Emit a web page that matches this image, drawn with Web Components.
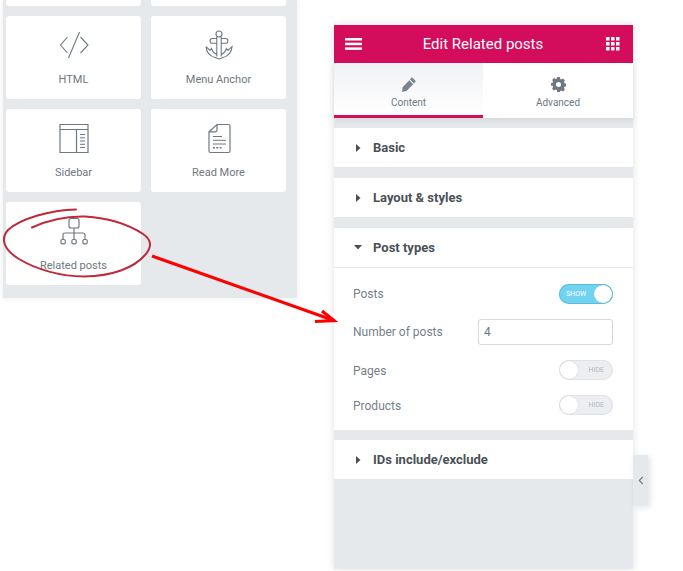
<!DOCTYPE html>
<html><head><meta charset="utf-8"><style>
html,body{margin:0;padding:0;background:#fff;font-family:Roboto,sans-serif}
body{width:683px;height:571px;overflow:hidden;position:relative}
.page{display:flex;align-items:flex-start;padding-left:3px}
</style></head><body>
<div class="page">
<widget-panel>
<widget-card class="stub"></widget-card><widget-card class="stub"></widget-card>
<widget-card label="HTML"><svg viewBox="0 0 50 50" width="50" height="50" fill="none" stroke="#6d7882" stroke-width="1.1"><path d="M18.500 15 11.500 23 18.500 31M31.500 15 39 23 31.500 31M30.500 10 19.500 36"/></svg></widget-card>
<widget-card label="Menu Anchor"><svg viewBox="0 0 50 50" width="50" height="50" fill="none" stroke="#6d7882" stroke-width="1.1"><circle cx="25" cy="12" r="3"/><path d="M22.800 15V34.500M27.200 15V34.500M22.800 16.500H18.500a2.300 2.300 0 0 0 0 4.800H22.800M27.200 16.500H31.500a2.300 2.300 0 0 1 0 4.800H27.200M12 24.700c.5 6 4.500 9.500 9 10.800L25 37l4-1.500c4.500-1.300 8.500-4.800 9-10.800l-4 3.800-1.500-2c-1 3-3.500 5.300-5.300 6M12 24.700l4 3.800 1.500-2c1 3 3.500 5.300 5.300 6"/></svg></widget-card>
<widget-card label="Sidebar"><svg viewBox="0 0 50 50" width="50" height="50" fill="none" stroke="#6d7882" stroke-width="1.200"><path d="M11 9.500H39V37.500H11ZM11 14.500H39M27.500 14.500V37.500"/><path stroke-width="1" d="M31 19.500h5M31 22.800h5M31 26h5M31 29.300h5M31 32.500h5"/></svg></widget-card>
<widget-card label="Read More"><svg viewBox="0 0 50 50" width="50" height="50" fill="none" stroke="#6d7882" stroke-width="1.200"><path d="M23 9.500H34.500a1.500 1.500 0 0 1 1.500 1.500V36a1.500 1.500 0 0 1-1.500 1.500H16.500a1.500 1.500 0 0 1-1.500-1.500V16.800ZM15 16.800H21.500a1.500 1.500 0 0 0 1.500-1.500V9.500"/><path stroke-width="1" d="M19 21.500h9M19 25.300h13M19 29h13"/><path stroke-width="1.500" stroke-dasharray="2 1.300" d="M19 32.800h9"/></svg></widget-card>
<widget-card label="Related posts"><svg viewBox="0 0 50 50" width="50" height="50" fill="none" stroke="#6d7882" stroke-width="1.200"><rect x="20" y="10.500" width="10" height="9.500" rx="2"/><path d="M25 20V31M14 31v-4a2 2 0 0 1 2-2H34a2 2 0 0 1 2 2V31"/><rect x="12" y="31.500" width="4.300" height="4.300" rx="1.300"/><rect x="22.900" y="31.500" width="4.300" height="4.300" rx="1.300"/><rect x="33.900" y="31.500" width="4.300" height="4.300" rx="1.300"/></svg></widget-card>
</widget-panel>
<edit-panel title-text="Edit Related posts">
<panel-section heading="Basic"></panel-section>
<panel-section heading="Layout &amp; styles"></panel-section>
<panel-section heading="Post types" open>
<control-row label="Posts" style="height:38px"><toggle-switch on></toggle-switch></control-row>
<control-row label="Number of posts" style="height:38px"><number-input value="4"></number-input></control-row>
<control-row label="Pages" style="height:38px;--ls:2px"><toggle-switch></toggle-switch></control-row>
<control-row label="Products" style="height:32px;--ls:2px"><toggle-switch></toggle-switch></control-row>
</panel-section>
<panel-section heading="IDs include/exclude" style="margin-top:-1px"></panel-section>
</edit-panel>
</div>
<annotation-marks></annotation-marks>
<script>
customElements.define('widget-panel',class extends HTMLElement{constructor(){super();this.attachShadow({mode:'open'}).innerHTML=`<style>:host{display:block;width:294px;height:298px;background:#e6e9ec;box-shadow:0 0 6px rgba(0,0,0,.08);flex:none}
.g{display:grid;grid-template-columns:135px 135px;grid-template-rows:6px 83px 83px 83px;gap:10px;padding-left:3px}</style><div class="g"><slot></slot></div>`}});
customElements.define('widget-card',class extends HTMLElement{constructor(){super();this.attachShadow({mode:'open'}).innerHTML=`<style>:host{display:flex;flex-direction:column;align-items:center;background:#fff;border-radius:3px;height:100%;overflow:hidden}
:host(.stub){border-radius:0 0 3px 3px}
.i{height:50px;width:50px;margin-top:6px;display:block}.l{font:11px/13px Roboto,sans-serif;color:#6d7882;margin-top:.5px}</style><div class="i"><slot></slot></div><div class="l"></div>`}
connectedCallback(){const l=this.getAttribute('label');if(l)this.shadowRoot.querySelector('.l').textContent=l}});
customElements.define('edit-panel',class extends HTMLElement{constructor(){super();this.attachShadow({mode:'open'}).innerHTML=`<style>:host{display:block;position:relative;width:299px;height:544px;margin:25px 0 0 37px;background:#e6e9ec;box-shadow:0 0 8px rgba(0,0,0,.12);flex:none}
header{height:38px;background:#d30c5c;color:#fff;display:flex;align-items:center;justify-content:space-between;padding:0 13px 0 11px}
h1{margin:0 3px 0 0;font:400 15px/37px Roboto,sans-serif;color:#fff}
.tabs{display:flex;height:55px;background:#fff;box-shadow:0 3px 6px rgba(0,0,0,.07);position:relative;margin-bottom:10px}
.tab{width:149px;flex:none;display:flex;flex-direction:column;align-items:center;font:10px/12px Roboto,sans-serif;color:#6d7882;box-sizing:border-box;padding-top:14px}
.tab.a{background:linear-gradient(#f0f1f4,#fff);border-bottom:3px solid #d30c5c}
.tab svg{display:block;margin-bottom:5px}
.tab.b{flex:1}
.sec{display:flex;flex-direction:column;gap:11px}
.col{position:absolute;left:299px;top:430px;width:15px;height:50px;background:#e6e9ec;box-shadow:2px 2px 6px rgba(0,0,0,.12);display:flex;align-items:center;justify-content:center}</style>
<header><svg width="18" height="12" viewBox="0 0 18 12" fill="#fff"><rect width="17" height="2.500" y="0"/><rect width="17" height="2.500" y="4.700"/><rect width="17" height="2.500" y="9.400"/></svg><h1></h1><svg width="14" height="14" viewBox="0 0 14 14" fill="#fff"><path d="M0 0h3.500v3.500H0zM5 0h3.500v3.500H5zM10 0h3.500v3.500H10zM0 5h3.500v3.500H0zM5 5h3.500v3.500H5zM10 5h3.500v3.500H10zM0 10h3.500v3.500H0zM5 10h3.500v3.500H5zM10 10h3.500v3.500H10z"/></svg></header>
<div class="tabs"><div class="tab a"><svg width="14" height="15" viewBox="0 0 14 15" fill="#7a848e"><path d="M10.300.8l3 2.700c.4.400.4 1 0 1.400l-1.400 1.500L8 2.500 9 .9c.4-.4.900-.4 1.300-.1zM7.300 3.300l3.900 3.900-6.700 6.900L0 15l.6-4.700z"/></svg>Content</div><div class="tab b"><svg width="15" height="15" viewBox="0 0 15 15"><path fill="#6d7882" fill-rule="evenodd" d="M6.200 0h2.600l.4 2c.4.100.8.300 1.100.5l1.800-1 1.800 1.900-1 1.700c.2.400.4.800.5 1.200l2 .4v2.600l-2 .4c-.1.400-.3.800-.5 1.200l1 1.700-1.800 1.800-1.800-1c-.3.200-.7.400-1.100.5L8.800 15H6.200l-.4-2c-.4-.1-.8-.3-1.100-.5l-1.800 1-1.800-1.800 1-1.700c-.2-.4-.4-.8-.5-1.200L0 8.800V6.200l1.600-.4c.1-.4.300-.8.500-1.200l-1-1.700L3 1.100l1.800 1c.3-.2.700-.4 1.100-.5zM7.500 5a2.500 2.500 0 1 0 0 5 2.500 2.500 0 0 0 0-5z"/></svg>Advanced</div></div>
<div class="sec"><slot></slot></div>
<div class="col"><svg width="6" height="9" viewBox="0 0 6 9" fill="none" stroke="#6d7882" stroke-width="1.200"><path d="M4.800.8 1.300 4.500l3.500 3.700"/></svg></div>`}
connectedCallback(){this.shadowRoot.querySelector('h1').textContent=this.getAttribute('title-text')}});
customElements.define('panel-section',class extends HTMLElement{constructor(){super();this.attachShadow({mode:'open'}).innerHTML=`<style>:host{display:block;background:#fff}
.h{height:39px;display:flex;align-items:center;padding-left:22px;font:700 13px/39px Roboto,sans-serif;color:#495157;box-sizing:border-box}
:host([open]) .h{height:40px;border-bottom:1px solid #e6e9ec}
.tri{width:17px;flex:none;display:flex}
.b{display:none;padding:7px 20px 9px 19px}:host([open]) .b{display:block}</style>
<div class="h"><span class="tri"></span><span class="t"></span></div><div class="b"><slot></slot></div>`}
connectedCallback(){const s=this.shadowRoot;s.querySelector('.t').textContent=this.getAttribute('heading');s.querySelector('.tri').innerHTML=this.hasAttribute('open')?'<svg width="9" height="5" viewBox="0 0 9 5" style="margin-left:-2px" fill="#495157"><path d="M0 0h8L4 4.500z"/></svg>':'<svg width="5" height="8" viewBox="0 0 5 8" fill="#495157"><path d="M0 0l4.500 4L0 8z"/></svg>'}});
customElements.define('control-row',class extends HTMLElement{constructor(){super();this.attachShadow({mode:'open'}).innerHTML=`<style>:host{display:flex;align-items:center;justify-content:space-between;font:12px/14px Roboto,sans-serif;color:#76808a}span{margin-top:var(--ls,0)}</style><span></span><slot></slot>`}
connectedCallback(){this.shadowRoot.querySelector('span').textContent=this.getAttribute('label')}});
customElements.define('toggle-switch',class extends HTMLElement{constructor(){super();this.attachShadow({mode:'open'}).innerHTML=`<style>:host{display:block;position:relative;width:54px;height:20px;border-radius:10px;background:#eceef1;box-shadow:inset 0 0 0 1px #dfe2e6;font:7px/20px Roboto,sans-serif;color:#b0b9c0;text-align:right;box-sizing:border-box}
:host([on]){background:#71d3f2;box-shadow:inset 0 0 0 1px #5fbcd9;color:#fff;text-align:left}
i{position:absolute;left:1px;top:1px;width:18px;height:18px;border-radius:50%;background:#fff;box-shadow:0 0 1px rgba(0,0,0,.2)}
:host([on]) i{left:35px}
span{display:inline-block;padding:0 9px 0 7px}</style><i></i><span></span>`}
connectedCallback(){this.shadowRoot.querySelector('span').textContent=this.hasAttribute('on')?'SHOW':'HIDE'}});
customElements.define('number-input',class extends HTMLElement{constructor(){super();this.attachShadow({mode:'open'}).innerHTML=`<style>:host{display:block;width:135px;height:26px;box-sizing:border-box;border:1px solid #d5dadf;border-radius:3px;padding-left:5px;font:12px/24px Roboto,sans-serif;color:#6d7882}</style><span></span>`}
connectedCallback(){this.shadowRoot.querySelector('span').textContent=this.getAttribute('value')}});
customElements.define('annotation-marks',class extends HTMLElement{constructor(){super();this.attachShadow({mode:'open'}).innerHTML=`<style>:host{position:absolute;left:0;top:0;width:683px;height:571px;display:block;pointer-events:none}svg{display:block}</style>
<svg width="683" height="571" fill="none"><path d="M76 209.500C50 210 20 219 8 230 0 239 4 250 19 259 37 270 62 276.500 84 276.500 112 276 134 268 145 255 152 247 152 240 143 234 128 224 108 218 85 216.500 65 216 46 221 32 227.500" stroke="#bf2a3a" stroke-width="2" stroke-linecap="round"/><path d="M152 256 334 320.500" stroke="#f00" stroke-width="3.200"/><path d="M322 311 334 320.500 315 321.500" stroke="#f00" stroke-width="3.200"/></svg>`}});
</script>
</body></html>
